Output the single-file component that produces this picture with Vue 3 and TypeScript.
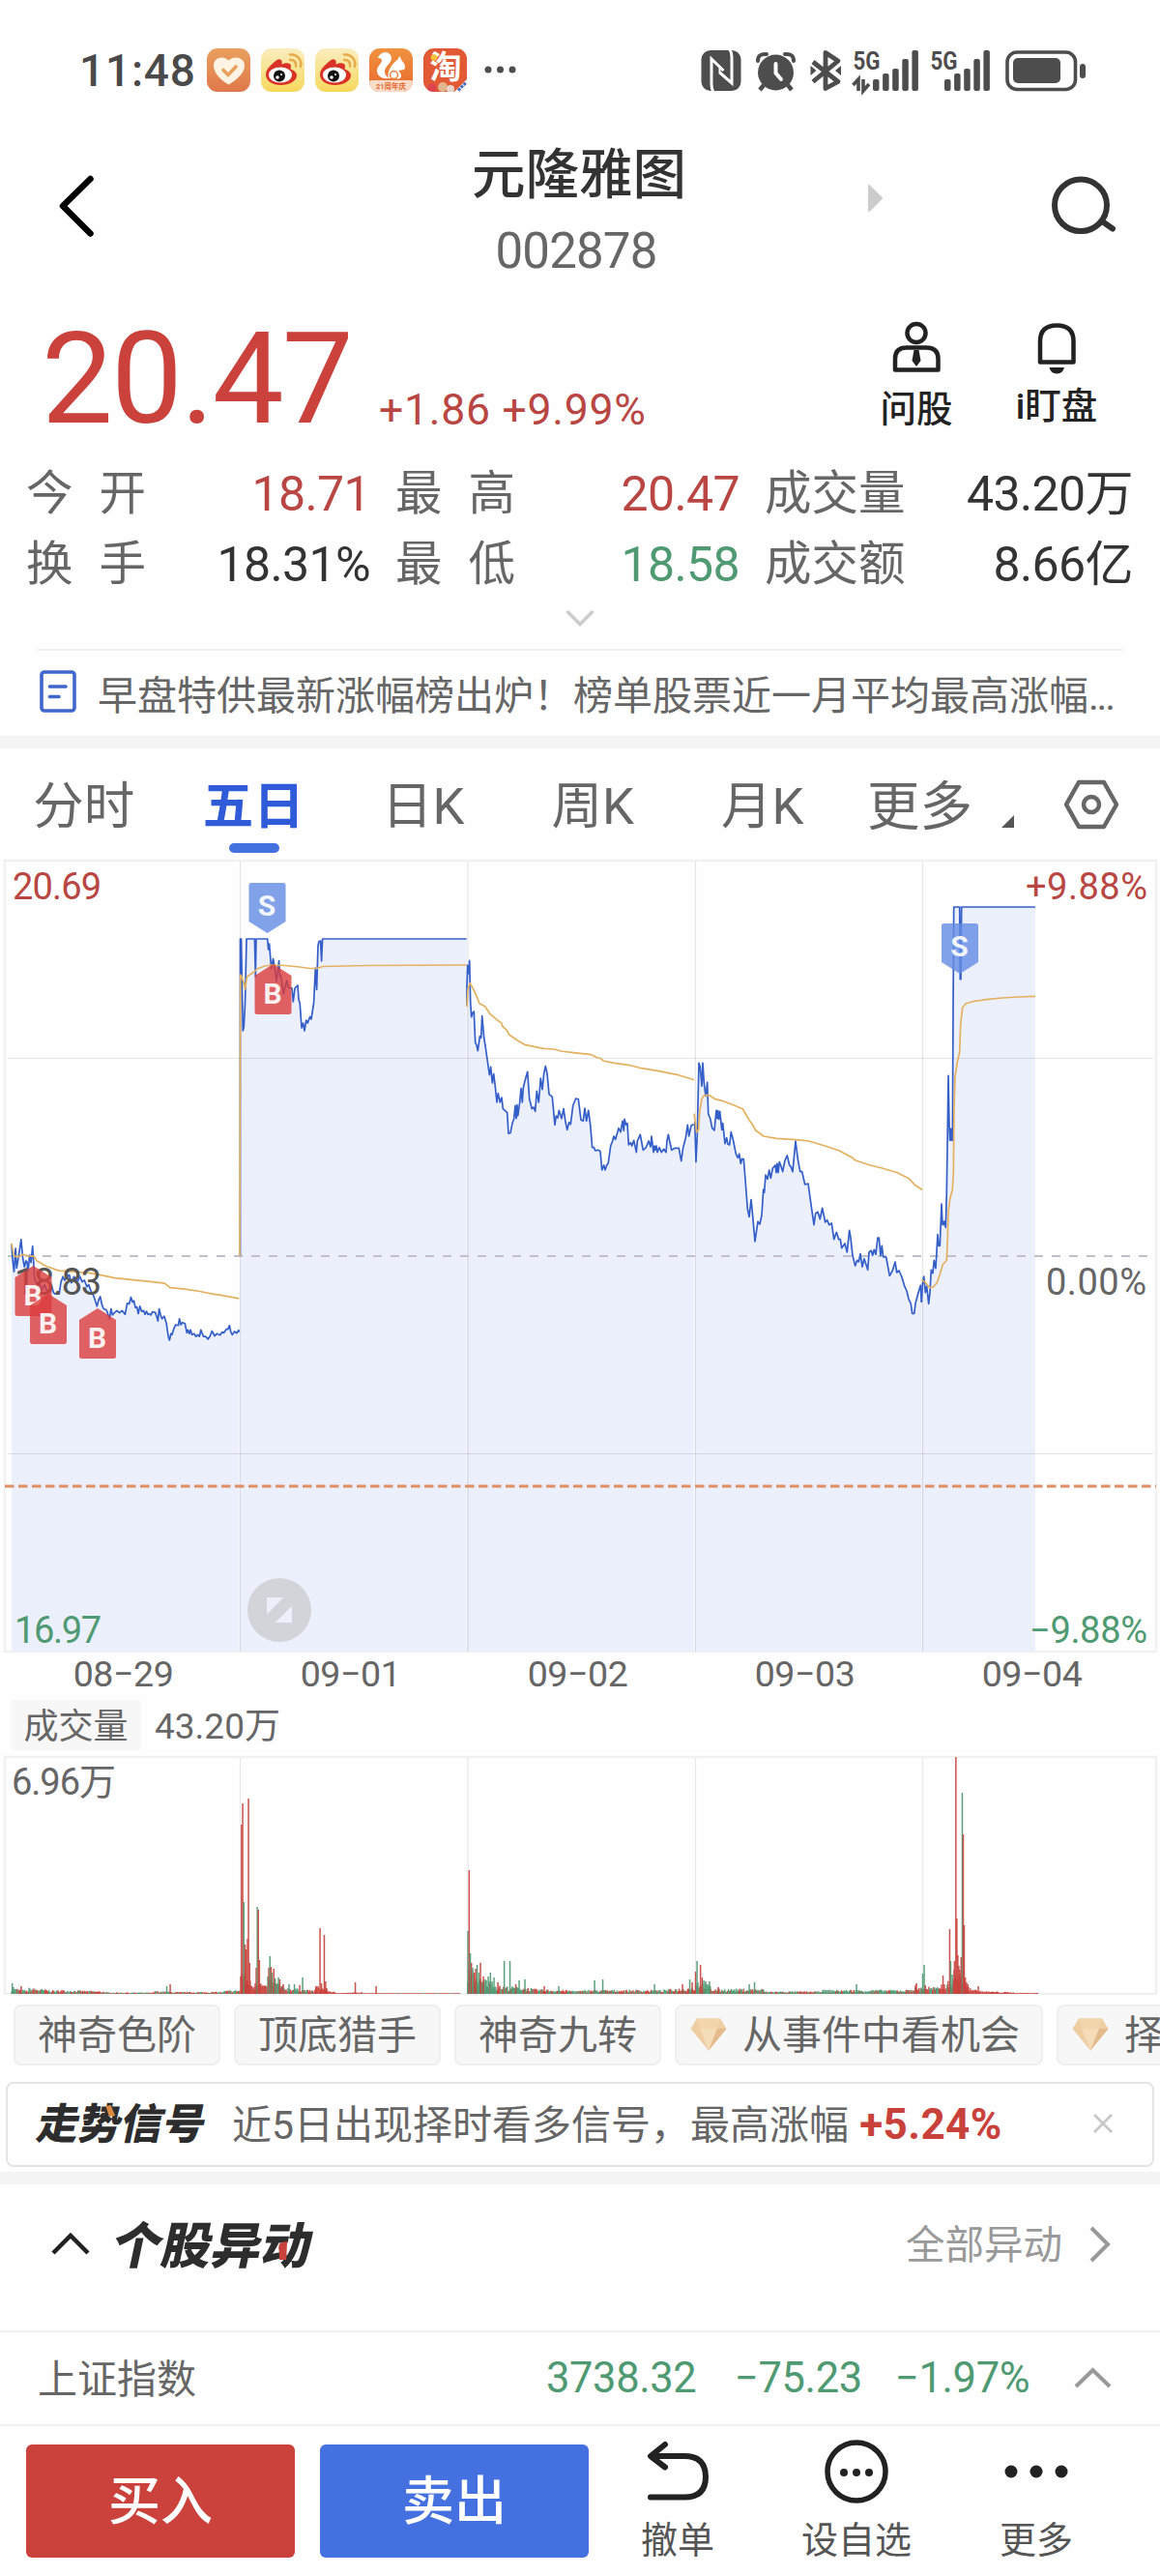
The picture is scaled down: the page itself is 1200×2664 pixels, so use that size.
<script setup lang="ts">
interface Session {
  ox: number
  oy: number
  k: number
  price: string
  avg: string
  date: string
}

// Each session keeps its samples relative to its own origin, scaled by k.
const sessions: Session[] = [
  {
    ox: 0, oy: 1210, k: 1 / 2.613, date: '08-29',
    price: '31,200 34,240 38,275 42,212 45,265 49,240 53,215 57,188 62,240 66,262 70,245 73,248 76,272 80,230 84,250 88,206 91,250 93,290 100,310 106,300 112,325 120,310 128,330 134,320 140,315 145,332 150,335 160,335 165,302 170,288 175,298 180,290 187,283 193,305 200,288 205,296 210,300 216,288 222,302 228,298 235,315 240,310 245,325 254,342 262,368 267,350 271,342 276,365 280,375 288,378 296,402 300,375 304,392 310,385 316,380 323,386 330,380 338,390 344,360 349,362 354,344 358,357 362,353 366,372 370,370 374,388 378,368 383,382 388,380 392,390 396,382 400,390 404,388 408,392 412,383 420,385 424,398 427,408 430,375 434,392 438,402 444,395 450,415 455,450 458,460 462,442 465,445 470,428 475,418 482,420 485,402 489,418 493,412 500,415 505,440 508,432 512,442 515,432 519,445 525,442 530,450 535,445 539,450 543,432 550,450 556,450 562,457 568,448 573,435 580,448 587,442 595,446 600,438 605,440 612,430 616,430 620,420 624,438 628,445 634,436 640,441 645,433 647,438',
    avg: '31,198 38,232 50,235 62,228 75,232 92,233 100,246 125,260 160,272 200,275 240,278 270,283 310,292 360,297 400,301 445,306 460,318 500,322 540,328 570,334 600,339 646,347',
  },
  {
    ox: 0, oy: 0, k: 1, date: '09-01',
    price: '248.5,1299 248.5,971 249.6,971 250.4,1020 251.3,1066 252.3,1062 253.6,1036 255,971 263.4,971 264.3,1010 265,971 276.7,971 277.6,982 278.6,976 280.6,1001.5 282.6,991.5 284.2,1001 286,1015 288.6,993.5 289.6,1010 290.6,1009 293.3,1028 296.6,1014 298.3,1021 302,1022 303.3,1036 305,1022 308,1019 309,1034 310.2,1037 312,1063 313.6,1058 315,1066 316.7,1055 318.3,1058 320.6,1051.5 322,1054 324.6,1037 326.3,1001 327.6,1023.5 329,978 330,973.5 331.6,973 332.6,994 333.6,971 482.6,971',
    avg: '248,1299 248.7,1008 250,1010 252,1016 253.6,1023 255.5,1010 263,1005 266,1002 274,999 280,998 295,998.5 310,1000 320,1001.5 328,1001.5 334,999.5 380,998.5 483,998',
  },
  {
    ox: 480, oy: 960, k: 1 / 3, date: '09-02',
    price: '9,240 9,180 11,115 14,140 17,100 20,230 23,275 27,262 31,258 35,355 39,362 43,380 47,350 49,335 53,340 56,272 62,340 67,370 74,420 79,455 83,430 88,480 92,452 97,490 102,540 106,512 112,540 117,525 121,560 127,565 134,572 138,637 144,635 150,605 155,590 159,550 162,590 165,548 167,582 173,540 177,497 181,540 184,495 190,470 197,445 203,530 211,560 216,555 221,568 226,505 232,540 238,465 243,500 248,450 253,428 258,450 264,515 274,523 282,610 286,582 291,588 295,565 303,590 309,560 315,600 320,625 326,602 331,608 338,550 347,528 355,530 363,595 370,598 375,558 380,598 386,565 392,610 398,680 403,680 408,690 416,688 423,692 428,750 434,735 438,750 443,735 448,728 455,675 461,660 465,645 470,655 480,620 486,632 492,598 496,628 498,592 503,610 507,605 511,672 517,665 521,675 527,658 535,695 538,660 547,640 556,688 565,680 573,660 579,678 582,645 588,695 591,675 594,688 597,675 600,695 606,680 613,695 620,685 627,695 630,660 634,640 644,688 655,682 667,682 674,722 680,680 688,650 694,610 698,645 705,612 713,608',
    avg: '9,243 12,190 19,170 30,190 38,208 48,233 65,242 80,265 95,278 117,295 120,305 133,316 140,330 165,347 188,361 220,368 248,373 280,375 300,381 340,386 395,392 410,400 425,404 432,411 465,418 510,424 545,433 600,442 665,455 690,463 714,470',
  },
  {
    ox: 480, oy: 960, k: 1 / 3, date: '09-03',
    price: '716,600 720,725 724,640 729,418 733,430 738,490 741,418 745,480 750,520 755,478 758,575 764,590 770,620 777,627 783,565 786,590 788,566 791,592 794,568 800,625 803,605 810,668 815,650 819,670 824,672 829,632 836,660 844,700 850,712 854,700 859,730 863,715 868,716 873,780 880,870 885,895 891,842 895,880 903,972 912,910 918,918 924,890 929,810 932,820 936,765 942,778 947,750 952,775 958,745 966,735 969,758 972,730 975,758 979,725 984,738 989,755 996,720 1003,705 1010,735 1015,740 1020,755 1029,660 1036,715 1043,755 1049,755 1058,795 1068,792 1076,850 1086,920 1091,885 1098,880 1105,902 1112,868 1121,912 1127,905 1133,920 1141,915 1148,965 1156,943 1163,965 1168,965 1172,992 1182,978 1189,1005 1196,937 1200,960 1206,1015 1214,1047 1220,1030 1225,1035 1230,1010 1236,1050 1242,1025 1253,1060 1257,1005 1264,1000 1268,1015 1273,997 1278,1012 1284,960 1288,960 1293,1015 1297,985 1301,1020 1310,1020 1321,1078 1330,1062 1338,1035 1343,1068 1350,1062 1358,1080 1367,1110 1374,1125 1380,1150 1387,1165 1391,1195 1397,1195 1402,1160 1410,1130 1417,1108 1420,1160',
    avg: '714,575 722,632 728,625 731,570 738,530 745,518 762,518 780,530 800,535 830,546 865,560 885,595 895,608 905,627 930,645 970,652 1030,656 1070,660 1120,675 1165,690 1205,712 1215,720 1260,735 1300,745 1345,758 1380,776 1400,797 1422,811',
  },
  {
    ox: 880, oy: 880, k: 1 / 3, date: '09-04',
    price: '220,1400 223,1345 227,1320 232,1370 236,1350 242,1405 246,1370 250,1300 255,1310 259,1270 264,1295 270,1190 273,1225 277,1225 282,1095 285,1160 288,1150 291,1160 293,1148 295,1168 298,1060 301,860 303,697 306,850 308,898 310,862 312,898 314,862 316,898 318,500 320,174 338,174 340,398 342,398 344,174 573,174',
    avg: '220,1330 233,1340 245,1355 256,1353 268,1340 278,1310 285,1285 298,1270 301,1200 303,1120 308,1080 316,1050 319,1000 321,800 324,700 331,655 338,625 341,540 347,485 358,473 380,467 420,461 470,456 520,453 573,451',
  },
]

// The plot's user space starts at y = 888.
const TOP = 888
const BASE = 1708 - TOP

function toPoints(s: Session, raw: string): number[][] {
  return raw.split(' ').map((p) => {
    const [x, y] = p.split(',').map(Number)
    return [+(s.ox + x * s.k).toFixed(1), +(s.oy + y * s.k - TOP).toFixed(1)]
  })
}
const join = (pts: number[][]) => pts.map((p) => p.join(',')).join(' ')
const lines = sessions.map((s) => {
  const pts = toPoints(s, s.price)
  return {
    price: join(pts),
    avg: join(toPoints(s, s.avg)),
    area: `${pts[0][0]},${BASE} ${join(pts)} ${pts[pts.length - 1][0]},${BASE}`,
  }
})

const gridX = [248.5, 484, 719.5, 954.5]

const marks = [
  { k: 'B', x: 15.5, y: 421 },
  { k: 'B', x: 31, y: 450 },
  { k: 'B', x: 82, y: 465 },
  { k: 'S', x: 257.5, y: 25 },
  { k: 'B', x: 263.5, y: 109 },
  { k: 'S', x: 974, y: 67 },
]

// Volume: [x, height, 1 = up / 0 = down]
const spikes: number[][] = [
  [12.6, 11, 0], [14, 7, 0], [21.8, 8, 1], [172.5, 8, 0], [176, 10, 1],
  [249.8, 175, 1], [251, 197, 1], [252.2, 95, 0], [253.5, 51, 1], [254.7, 46, 1], [256, 57, 1], [257, 202, 1], [258.2, 32, 1],
  [265, 27, 1], [266.1, 90, 0], [267.2, 87, 1], [268.3, 35, 1], [278, 27, 1], [279.2, 39, 0], [280.4, 28, 1], [281.5, 22, 0],
  [283.2, 26, 1], [284.6, 16, 0], [288, 17, 0], [289.4, 15, 1], [293, 10, 1], [299, 10, 0], [304.5, 10, 0], [310, 9, 1],
  [313, 17, 0], [327, 8, 1], [331, 68, 1], [332.5, 11, 1], [335.4, 61, 1], [336.8, 13, 1], [367.5, 12, 1], [389, 8, 1],
  [484, 65, 0], [485.3, 128, 1], [486.5, 42, 0], [487.6, 32, 1], [489, 27, 0], [490.6, 22, 1], [492, 26, 1], [493.5, 30, 0],
  [495.3, 22, 0], [497, 32, 1], [500, 18, 1], [503, 14, 0], [505, 18, 0], [507.3, 22, 0], [509, 13, 0], [511, 17, 0], [515, 12, 1],
  [521.6, 34, 0], [527.5, 34, 0], [533.5, 10, 1], [537, 14, 0], [543, 15, 0], [563, 8, 1], [578, 8, 0], [615, 14, 0], [623.5, 15, 0],
  [677, 10, 0], [706, 10, 1], [713.5, 15, 0], [716, 12, 1], [719.5, 23, 1], [721, 34, 0], [724.6, 30, 1], [726.3, 17, 1],
  [728, 14, 0], [730, 13, 0], [734, 13, 0], [743, 7, 1], [775, 10, 0], [780.5, 12, 0], [886, 10, 0], [947, 9, 1], [948, 11, 1],
  [954.5, 21, 0], [956, 30, 0], [957.2, 9, 1], [975.5, 19, 1], [982.4, 67, 1], [983.4, 34, 0], [985, 20, 0], [987.4, 34, 1],
  [988.8, 245, 1], [989.8, 78, 1], [990.8, 40, 1], [991.8, 29, 1], [992.8, 25, 1], [994.2, 38, 1], [995.4, 208, 0],
  [996.4, 165, 1], [997.4, 71, 1], [998.5, 17, 1], [999.8, 12, 1], [1001.2, 10, 1], [1012, 8, 1],
]

// [from, to, height at start, height at end, share of rising minutes]
const profile: number[][] = [
  [12, 30, 6, 3, 0.5], [30, 60, 6, 3, 0.4], [60, 108, 4, 2.5, 0.6], [108, 160, 1.6, 1.3, 0.6], [160, 180, 3, 2, 0.5],
  [180, 232, 1.8, 2, 0.6], [232, 248, 3, 4, 0.6], [249, 264, 24, 8, 1], [264, 277, 16, 6, 1], [277, 292, 18, 8, 0.5],
  [292, 326, 7, 3, 0.6], [326, 338, 8, 6, 1], [338, 346, 4, 2, 1], [346, 375, 1, 1.5, 1], [375, 476, 0.6, 0.4, 0.8],
  [484, 500, 26, 12, 0.5], [500, 515, 16, 8, 0.1], [515, 550, 8, 6, 0.5], [550, 605, 5, 3, 0.5], [605, 680, 4, 4, 0.5],
  [680, 719, 3.5, 7, 0.6], [720, 735, 14, 8, 0.4], [735, 790, 5, 5, 0.4], [790, 850, 2.5, 2.5, 0.6], [850, 940, 4, 4, 0.3],
  [940, 954, 5, 7, 0.7], [955, 972, 8, 6, 0.6], [972, 986, 9, 14, 0.6], [986, 998, 24, 18, 1], [998, 1012, 9, 3, 1],
  [1012, 1050, 3, 1.5, 1], [1050, 1074, 1, 1, 1],
]

let seed = 7
function rnd(): number {
  seed = (seed * 16807) % 2147483647
  return seed / 2147483647
}
const bars: number[][] = []
for (const [a, b, h0, h1, up] of profile) {
  for (let x = a; x < b; x += 0.98) {
    const env = h0 + ((h1 - h0) * (x - a)) / (b - a)
    bars.push([+x.toFixed(2), +Math.max(0.6, env * (0.4 + 0.7 * rnd())).toFixed(1), rnd() < up ? 1 : 0])
  }
}
bars.push(...spikes)

const tabs = ['分时', '五日', '日K', '周K', '月K']
const quotes = [
  { l: '今 开', v: '18.71', c: 'up' },
  { l: '最 高', v: '20.47', c: 'up' },
  { l: '成交量', v: '43.20万', c: '' },
  { l: '换 手', v: '18.31%', c: '' },
  { l: '最 低', v: '18.58', c: 'down' },
  { l: '成交额', v: '8.66亿', c: '' },
]
const chips = [
  { t: '神奇色阶', gem: false },
  { t: '顶底猎手', gem: false },
  { t: '神奇九转', gem: false },
  { t: '从事件中看机会', gem: true },
  { t: '择时', gem: true },
]
</script>

<template>
  <div class="page">
    <div class="status">
      <span class="clock">11:48</span>
      <svg class="apps" width="330" height="48" viewBox="212 50 330 48">
        <defs>
          <linearGradient id="peach" x1="0" y1="0" x2="0" y2="1"><stop offset="0" stop-color="#eaa05f" /><stop offset="1" stop-color="#e0784b" /></linearGradient>
          <linearGradient id="lemon" x1="0" y1="0" x2="0" y2="1"><stop offset="0" stop-color="#faeec0" /><stop offset="1" stop-color="#f6d75c" /></linearGradient>
          <linearGradient id="amber" x1="0" y1="0" x2="0" y2="1"><stop offset="0" stop-color="#f0923f" /><stop offset="1" stop-color="#e9692f" /></linearGradient>
          <clipPath id="ucClip"><rect x="382" y="51" width="45" height="45" rx="11" /></clipPath>
          <clipPath id="tbClip"><rect x="438" y="51" width="45" height="45" rx="11" /></clipPath>
        </defs>
        <rect x="214" y="51" width="45" height="45" rx="11" fill="url(#peach)" />
        <path d="M236.500 88.500C229 84 221 77 221 69C221 60 231 58 236.500 63.500C242 58 253 60 253 69C253 77 244 84 236.500 88.500Z" fill="#fff3e4" />
        <path d="M231 73.500L236 78.500L244 70" fill="none" stroke="#e8a15d" stroke-width="3.600" stroke-linecap="round" />
        <g v-for="dx in [0, 56]" :key="dx" :transform="`translate(${dx} 0)`">
          <rect x="270" y="51" width="45" height="45" rx="11" fill="url(#lemon)" />
          <path d="M275 78C275 73 280 68 284.500 64.500C286.500 62 290 61 291.500 64C292 65.500 291.500 67 291.500 67.500C296 65.500 301 65.500 301 69.500C301 71 300.500 72 300.500 72.500C304 73.500 307 76 307 79C307 85 299 89 290.500 89C282 89 275 85 275 78Z" fill="#d93328" />
          <ellipse cx="290" cy="78.500" rx="12" ry="8" fill="#fff" />
          <circle cx="289" cy="79.500" r="6" fill="#111" /><circle cx="287" cy="81" r="1.800" fill="#fff" /><circle cx="291" cy="78" r="1" fill="#fff" />
          <path d="M300 63C304.500 62.500 307 65.500 306 69.500M300 57.500C308 57 312.500 63 311 70" fill="none" stroke="#e6ab4a" stroke-width="2.500" stroke-linecap="round" />
        </g>
        <g clip-path="url(#ucClip)">
          <rect x="382" y="51" width="45" height="45" fill="url(#amber)" />
          <rect x="378" y="84" width="53" height="14" rx="7" fill="#fbdcc8" />
          <path d="M391 61C393 54 404 53 405 61C405 67 398 69 398 75C398 78 400 80 402 82C396 83 390 80 390 74C390 69 395 67 395 63C394 61 392 61 391 61Z" fill="#fff" />
          <path d="M402 82C400 76 404 68 411 63L413.500 59L416 64C419 67 420 71 418 73L412 74C416 78 416 81 413 82.500Z" fill="#fff" />
          <circle cx="407.500" cy="78.500" r="4" fill="#fff" stroke="#ed8038" stroke-width="1.500" />
          <text x="404.500" y="93" text-anchor="middle" font-size="7.500" font-weight="700" fill="#e56a31">21周年庆</text>
        </g>
        <g clip-path="url(#tbClip)">
          <rect x="438" y="51" width="45" height="45" fill="#e25a35" />
          <text x="461" y="82" text-anchor="middle" font-size="33" font-weight="700" fill="#fff">淘</text>
          <circle cx="449" cy="60.500" r="3.300" fill="#f6c038" />
          <path d="M470 96L483 83V96Z" fill="#fff" />
          <circle cx="447" cy="92" r="4.500" fill="#dd4450" /><circle cx="458" cy="91" r="5" fill="#e2b58c" /><circle cx="466" cy="93" r="4" fill="#e8d5cc" />
          <path d="M474 94.500L482 86.500" stroke="#4a6ec0" stroke-width="3" stroke-dasharray="3 1" />
        </g>
        <g fill="#4d4d4d"><circle cx="505" cy="73" r="3.500" /><circle cx="517.500" cy="73" r="3.500" /><circle cx="530" cy="73" r="3.500" /></g>
      </svg>
      <svg class="sys" width="402" height="66" viewBox="724 40 402 66" fill="#4d4d4d">
        <rect x="725.500" y="52" width="41" height="42" rx="9.500" />
        <path d="M738 95.500Q736 92 736 87V61L748.500 73M754.500 50.500Q757 54 757 59V86L744.500 75" fill="none" stroke="#fff" stroke-width="3" stroke-linejoin="miter" />
        <path d="M744.500 69V76" stroke="#fff" stroke-width="2" />
        <circle cx="802.500" cy="75" r="18.500" /><path d="M802.500 66V75.500L808 82" fill="none" stroke="#fff" stroke-width="4" stroke-linecap="round" />
        <path d="M784 63Q784 55 793 56M821 63Q821 55 812 56" fill="none" stroke="#4d4d4d" stroke-width="4" stroke-linecap="round" /><path d="M790 88L786 93M815 88L819 93" stroke="#4d4d4d" stroke-width="4.500" />
        <path d="M841 64L867 84.500L854 91.500V54.500L867 63L841 84.500" fill="none" stroke="#4d4d4d" stroke-width="4.800" stroke-linejoin="round" /><path d="M838.500 68L844.500 73L838.500 78ZM870 68L864 73L870 78Z" />
        <g v-for="(sx, i) in [0, 80]" :key="sx">
          <text :x="882.500 + sx" y="72" font-size="26" font-weight="700" textLength="28" lengthAdjust="spacingAndGlyphs">5G</text>
          <g v-for="(h, j) in [12, 18, 23, 33, 42]" :key="j"><rect :x="903 - i * 6 + sx + j * 10.100" :y="94 - h" width="6.500" :height="h" rx="2" /></g>
        </g>
        <path d="M888 94V82L882.500 88M893 82V94L899 87" fill="none" stroke="#4d4d4d" stroke-width="3.600" />
        <rect x="1042" y="54" width="70.500" height="38.500" rx="10" fill="none" stroke="#4d4d4d" stroke-width="3.600" />
        <rect x="1048" y="60" width="49" height="26" rx="5" /><rect x="1117" y="66" width="6" height="15" rx="3" />
      </svg>
    </div>

    <header class="head">
      <svg class="back" width="40" height="70" viewBox="0 0 40 70"><path d="M35.500 7L7 35L35.500 63.500" fill="none" stroke="#000" stroke-width="6.500" stroke-linecap="round" stroke-linejoin="round" /></svg>
      <div class="titles"><h1>元隆雅图</h1><div class="code">002878</div></div>
      <svg class="next" width="17" height="28" viewBox="0 0 17 28"><path d="M2 1V27L15 14Z" fill="#ccc" stroke="#ccc" stroke-width="2" stroke-linejoin="round" /></svg>
      <svg class="find" width="70" height="66" viewBox="1086 180 70 66" fill="none" stroke="#333" stroke-width="6" stroke-linecap="round"><ellipse cx="1118" cy="212.300" rx="27" ry="26.800" /><path d="M1141 229.500L1151 236.500" /></svg>
    </header>

    <section class="price">
      <div class="big">20.47</div>
      <div class="chg">+1.86 +9.99%</div>
      <div class="acts">
        <div class="act">
          <svg width="54" height="56" viewBox="0 0 54 56" fill="none" stroke="#222" stroke-width="4.500"><ellipse cx="27" cy="13.500" rx="9.500" ry="9.500" /><path d="M5 51.500V40Q5 28.500 17 28.500H37Q49.500 28.500 49.500 40V51.500Z" stroke-linejoin="round" /><path d="M24.500 31H29.500L31.500 42L27 48L22.500 42Z" fill="#222" stroke="none" /></svg>
          <span>问股</span>
        </div>
        <div class="act bell">
          <svg width="54" height="56" viewBox="0 0 54 56"><path d="M10 43.500V22Q10 5.500 27.300 5.500Q44.500 5.500 44.500 22V43.500Z" fill="none" stroke="#222" stroke-width="4.500" stroke-linejoin="round" /><path d="M19.500 49H35Q33.500 55.500 27.300 55.500Q21 55.500 19.500 49Z" fill="#222" /></svg>
          <span>i盯盘</span>
        </div>
      </div>
    </section>

    <section class="quotes">
      <div v-for="q in quotes" :key="q.l" class="q"><span class="ql">{{ q.l }}</span><span class="qv" :class="q.c">{{ q.v }}</span></div>
    </section>
    <div class="more"><svg width="32" height="20" viewBox="0 0 32 20"><path d="M3.500 3L16 15.500L28.500 3" fill="none" stroke="#ccc" stroke-width="3.500" stroke-linecap="round" /></svg></div>

    <div class="news">
      <svg width="38" height="46" viewBox="0 0 38 46" fill="none" stroke="#3f66cc" stroke-width="3.600" stroke-linecap="round"><rect x="2" y="2" width="34" height="40" rx="3" /><path d="M10.500 17H27M10.500 27.500H20" /></svg>
      <span>早盘特供最新涨幅榜出炉！榜单股票近一月平均最高涨幅<i>...</i></span>
    </div>
    <div class="band"></div>

    <nav class="tabs">
      <div v-for="(t, i) in tabs" :key="t" class="tab" :class="{ on: i === 1 }">{{ t }}</div>
      <div class="tab last">更多</div>
      <svg class="corner" width="15" height="15" viewBox="0 0 15 15"><path d="M14 1V14H1Z" fill="#555" /></svg>
      <svg class="hex" width="58" height="54" viewBox="0 0 58 54" fill="none" stroke="#666" stroke-width="4.500" stroke-linejoin="round"><path d="M16 4H42L55 27L42 50H16L3 27Z" /><circle cx="29" cy="27" r="8" /></svg>
    </nav>

    <svg class="plot" width="1200" height="822" viewBox="0 0 1200 822">
      <rect x="5" y="2" width="1191" height="818" fill="none" stroke="#f1f1f1" stroke-width="2.500" />
      <polygon v-for="(l, i) in lines" :key="'a' + i" :points="l.area" fill="#ecf0fd" />
      <g stroke="#000" stroke-opacity=".1" stroke-width="1.200">
        <line v-for="x in gridX" :key="x" :x1="x" :x2="x" y1="3" y2="820" />
        <line x1="8" x2="1193" y1="206.500" y2="206.500" /><line x1="8" x2="1193" y1="615.500" y2="615.500" />
      </g>
      <line x1="8" x2="1193" y1="411" y2="411" stroke="#bfc0ca" stroke-width="2" stroke-dasharray="9 9" />
      <g fill="none" stroke-linejoin="round">
        <polyline v-for="(l, i) in lines" :key="'p' + i" :points="l.price" stroke="#355fc8" stroke-width="1.700" />
        <polyline v-for="(l, i) in lines" :key="'v' + i" :points="l.avg" stroke="#e3b160" stroke-width="1.700" />
      </g>
      <line x1="5" x2="1196" y1="649" y2="649" stroke="#df8e63" stroke-width="3" stroke-dasharray="9.500 4.500" />
      <text class="ax" x="15" y="451" textLength="90" fill="#555">18.83</text>
      <g v-for="(m, i) in marks" :key="'m' + i" :transform="`translate(${m.x} ${m.y})`">
        <path v-if="m.k === 'B'" d="M0 14L0 12L19 0L38 12V49.500Q38 52 35.500 52H2.500Q0 52 0 49.500Z" fill="#dc3c3c" fill-opacity=".8" />
        <path v-else d="M0 2.500Q0 0 2.500 0H35.500Q38 0 38 2.500V40L19 52L0 40Z" fill="#658ce4" fill-opacity=".82" />
        <text x="18.500" :y="m.k === 'B' ? 40.500 : 34" class="mk" text-anchor="middle">{{ m.k }}</text>
      </g>
      <g class="ax">
        <text x="13" y="42" textLength="92" fill="#b94642">20.69</text>
        <text x="15" y="811" textLength="90" fill="#4f9a72">16.97</text>
        <text x="1061" y="42" textLength="126" fill="#b94642">+9.88%</text>
        <text x="1082" y="451" textLength="104" fill="#666">0.00%</text>
        <text x="1065" y="811" textLength="122" fill="#4f9a72">−9.88%</text>
      </g>
      <circle cx="289" cy="777" r="33" fill="#d3d4d9" />
      <path d="M276 764H293.500L276 781.500ZM302 773V790H284.500Z" fill="#edf0fa" />
    </svg>
    <div class="dates"><span v-for="s in sessions" :key="s.date">{{ s.date.replace('-', '−') }}</span></div>

    <div class="volhead"><span class="vl">成交量</span><span>43.20万</span></div>
    <svg class="vol" width="1200" height="248" viewBox="0 0 1200 248">
      <rect x="5" y="2" width="1191" height="245" fill="none" stroke="#f1f1f1" stroke-width="2.500" />
      <line v-for="x in gridX" :key="x" :x1="x" :x2="x" y1="3" y2="246" stroke="#e9e9ec" stroke-width="1.300" />
      <rect v-for="(b, i) in bars" :key="i" :x="b[0] - 0.7" :y="247 - b[1]" width="1.500" :height="b[1]" :fill="b[2] ? '#c9423d' : '#4f9a74'" fill-opacity=".92" />
      <text x="12" y="40.500" class="ax" textLength="108" fill="#666">6.96万</text>
    </svg>

    <div class="chips">
      <div v-for="c in chips" :key="c.t" class="chip" :class="{ vip: c.gem }">
        <svg v-if="c.gem" width="38" height="34" viewBox="0 0 38 34"><path d="M7 .5H31L37.500 11L19 33.500L.5 11Z" fill="#eecda3" /><path d="M7 .5H31L28 11H10Z" fill="#f3d5ac" /><path d="M10 11H28L19 33.500Z" fill="#f5dcb8" /><path d="M28 11H37.500L19 33.500Z" fill="#e3ba8b" /></svg>{{ c.t }}
      </div>
    </div>

    <div class="signal">
      <b class="logo">走势信号<svg width="12" height="13" viewBox="0 0 12 13"><path d="M0 1L5 0L12 11L6 12Z" fill="#d98b42" /></svg></b>
      <span>近5日出现择时看多信号，最高涨幅 <em>+5.24%</em></span>
      <svg class="x" width="24" height="24" viewBox="0 0 24 24"><path d="M3 3L21 21M21 3L3 21" stroke="#c8c8c8" stroke-width="2.800" /></svg>
    </div>
    <div class="band"></div>

    <section class="moves">
      <svg width="42" height="26" viewBox="0 0 42 26"><path d="M3 22L21 4L39 22" fill="none" stroke="#222" stroke-width="4.500" /></svg>
      <b class="logo">个股异动<svg width="12" height="19" viewBox="0 0 12 19"><path d="M0 3Q3 0 8 0L11 19H4Z" fill="#cb413c" /></svg></b>
      <span class="all">全部异动</span>
      <svg width="24" height="42" viewBox="0 0 24 42"><path d="M3 4L20 21L3 38" fill="none" stroke="#999" stroke-width="4" /></svg>
    </section>

    <section class="index">
      <span class="nm">上证指数</span><span class="n n1">3738.32</span><span class="n n2">−75.23</span><span class="n n3">−1.97%</span>
      <svg width="42" height="26" viewBox="0 0 42 26"><path d="M3 21L20.500 4L38 21" fill="none" stroke="#999" stroke-width="4" /></svg>
    </section>

    <footer class="foot">
      <div class="btn buy">买入</div>
      <div class="btn sell">卖出</div>
      <div class="fi f1"><svg width="70" height="66" viewBox="0 0 70 66" fill="none" stroke="#222" stroke-width="6" stroke-linecap="round" stroke-linejoin="round"><path d="M22 5L7 17L22 28.500M8 17H42Q64 17 64 38.500Q64 59.500 42 59.500H7" /></svg><span>撤单</span></div>
      <div class="fi f2"><svg width="70" height="66" viewBox="0 0 70 66"><circle cx="35" cy="33" r="30" fill="none" stroke="#222" stroke-width="5.500" /><g fill="#222"><circle cx="22" cy="34" r="4" /><circle cx="35" cy="34" r="4" /><circle cx="48" cy="34" r="4" /></g></svg><span>设自选</span></div>
      <div class="fi f3"><svg width="70" height="66" viewBox="0 0 70 66" fill="#222"><circle cx="9" cy="33" r="6.500" /><circle cx="35" cy="33" r="6.500" /><circle cx="61" cy="33" r="6.500" /></svg><span>更多</span></div>
    </footer>
  </div>
</template>

<style>
body { margin: 0; background: #fefefe; }
</style>

<style scoped>
.page { width: 1200px; height: 2664px; overflow: hidden; background: #fefefe; color: #666; font-family: Roboto, "Noto Sans CJK SC", sans-serif; display: flex; flex-direction: column; white-space: nowrap; }
.page > * { flex: none; box-sizing: border-box; }
svg { display: block; flex: none; }
svg text { font-family: Roboto, "Noto Sans CJK SC", sans-serif; }
.up { color: #b94642 !important; }
.down { color: #4f9a72 !important; }

.status { height: 146px; display: flex; align-items: center; padding-left: 82px; }
.clock { width: 130px; font-size: 46px; font-weight: 500; color: #4a4a4a; letter-spacing: .8px; }
.sys { margin-left: 182px; }

.head { height: 167px; display: flex; align-items: center; position: relative; padding-left: 58px; }
.back { margin-top: -33px; }
.titles { position: absolute; left: 300px; width: 600px; top: 0; text-align: center; }
h1 { margin: 0; font-size: 55.500px; line-height: 71px; font-weight: 500; color: #333; margin-left: -2px; }
.code { font-size: 51px; line-height: 60px; margin-top: 13px; margin-left: -8px; letter-spacing: -.8px; }
.next { margin: -49px 0 0 799px; }
.find { margin: -33px 0 0 172px; }

.price { height: 163px; display: flex; align-items: flex-start; }
.big { width: 349px; margin-left: 43px; margin-top: 2px; font-size: 131.500px; line-height: 154px; color: #cb413c; letter-spacing: -1.900px; }
.chg { width: 500px; margin-top: 85px; font-size: 44.500px; line-height: 52px; color: #b94642; letter-spacing: .75px; }
.acts { display: flex; margin-top: 18px; margin-left: -2px; }
.act { width: 116px; display: flex; flex-direction: column; align-items: center; color: #222; font-size: 37.500px; font-weight: 500; line-height: 44px; }
.act span { margin-top: 14px; }
.bell { margin-left: 29px; }
.bell span { margin-top: 11px; }

.quotes { height: 144px; display: grid; grid-template-columns: 355px 355px 380px; column-gap: 27px; padding: 2px 0 0 28px; grid-template-rows: 73px 69px; font-size: 48.500px; line-height: 66px; }
.q { display: flex; justify-content: space-between; }
.ql { word-spacing: 15px; margin-left: -1px; }
.qv { color: #333; font-size: 50px; letter-spacing: -.6px; }
.more { height: 51px; display: flex; justify-content: center; padding-top: 10px; }
.news { height: 90px; margin: 0 38px; border-top: 2px solid #f0f0f0; display: flex; align-items: center; padding: 0 0 2px 3px; font-size: 41px; gap: 22px; }
.news i { font-style: normal; letter-spacing: -2.200px; }
.band { height: 13px; background: #f4f4f4; }

.tabs { height: 114px; display: flex; position: relative; }
.tab { width: 175.500px; text-align: center; font-size: 52.500px; line-height: 120px; position: relative; left: -1px; }
.tab.on { color: #2f5bd8; font-weight: 700; }
.tab.on::after { content: ""; position: absolute; left: 62px; top: 98px; width: 52px; height: 10px; border-radius: 5px; background: #4570e0; }
.last { width: 150px; font-size: 54.500px; }
.corner { margin: 68px 0 0 7px; }
.hex { margin: 31px 0 0 50px; }

.ax { font-size: 38px; }
.mk { font-size: 30px; font-weight: 700; fill: #fff; fill-opacity: .92; }
.dates { height: 48px; display: flex; padding-left: 10px; }
.dates span { width: 235px; text-align: center; font-size: 37.500px; line-height: 42px; letter-spacing: -.4px; }

.volhead { height: 57px; display: flex; align-items: flex-start; padding-left: 11px; font-size: 37px; line-height: 56px; gap: 14px; }
.vl { width: 135px; text-align: center; font-size: 36px; height: 52px; line-height: 56px; background: #f7f7f7; border-radius: 4px; }
.vol { height: 248px; }

.chips { height: 90px; display: flex; gap: 14px; padding: 10px 0 0 14px; overflow: hidden; }
.chip { box-sizing: border-box; width: 214px; height: 63px; flex: none; border: 2px solid #efefef; border-radius: 8px; background: #f7f7f7; font-size: 41px; line-height: 61px; padding-top: 2px; display: flex; justify-content: center; align-items: center; }
.vip { width: 381px; justify-content: flex-start; padding-left: 14px; gap: 16px; }
.vip svg { margin-top: -3px; }

.signal { height: 88px; margin: 0 6px; border: 2px solid #e4e4e4; border-radius: 8px; display: flex; align-items: center; font-size: 41px; }
.signal > span { width: 889px; margin-top: -6px; }
.signal em { font-style: normal; font-weight: 700; color: #c9413b; margin-left: 1px; font-size: 44px; letter-spacing: .4px; }
.signal .x { margin-top: -3px; }
.logo { position: relative; font-weight: 900; color: #2d2d2d; transform: skewX(-12deg); }
.logo svg { position: absolute; }
.signal .logo { width: 200px; margin-left: 32px; margin-top: -8px; font-size: 43.500px; }
.signal .logo svg { left: 66px; top: 15px; }
.signal + .band { margin-top: 5px; }

.moves { height: 151px; display: flex; align-items: center; padding: 0 0 28px 52px; }
.moves .logo { margin-left: 24px; margin-top: -5px; width: 819px; font-size: 51.500px; }
.moves .logo svg { left: 171px; top: 37px; }
.all { width: 189px; margin-top: -4px; font-size: 40.500px; color: #999; }

.index { height: 97px; border-top: 2px solid #f1f1f1; display: flex; align-items: center; padding-left: 39px; font-size: 41px; }
.nm { width: 526px; margin-top: -5px; }
.n { color: #4f9a72; font-size: 43.500px; letter-spacing: -.4px; }
.n1 { width: 195px; }
.n2 { width: 166px; }
.n3 { width: 184px; }

.foot { flex: 1 !important; border-top: 2px solid #f1f1f1; display: flex; padding: 19px 0 0 27px; }
.btn { width: 278px; height: 117px; border-radius: 6px; color: #fff; font-size: 54px; font-weight: 500; line-height: 120px; text-align: center; margin-right: 26px; }
.buy { background: #cb413c; }
.sell { background: #4570e0; }
.fi { width: 120px; margin-top: -5px; display: flex; flex-direction: column; align-items: center; font-size: 38px; line-height: 44px; color: #555; }
.fi span { margin-top: 16px; }
.f1 { margin-left: 6px; }
.f2 { margin-left: 65px; }
.f3 { margin-left: 66px; }
</style>
